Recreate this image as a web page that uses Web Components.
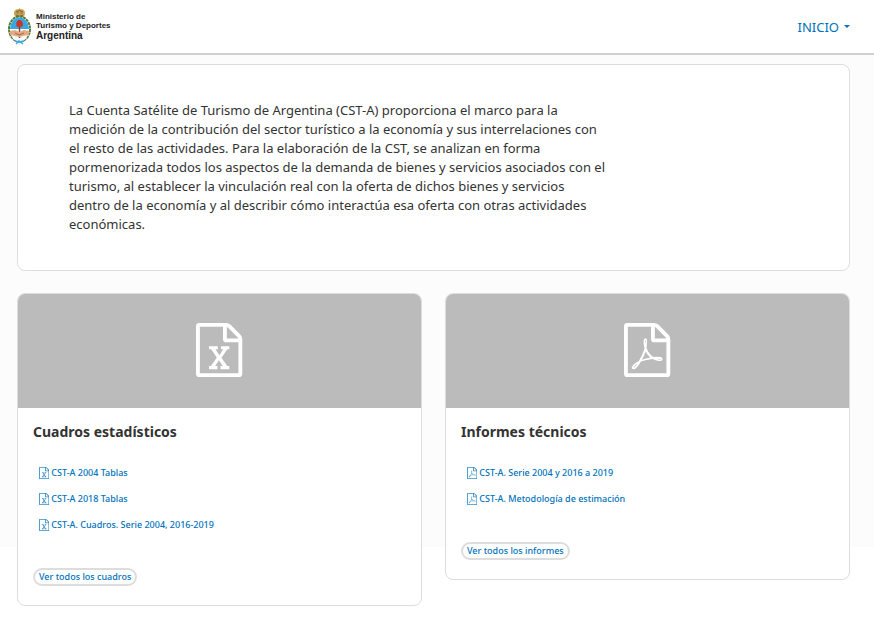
<!DOCTYPE html>
<html lang="es">
<head>
<meta charset="utf-8">
<meta name="viewport" content="width=device-width, initial-scale=1">
<title>Cuenta Satélite de Turismo de Argentina</title>
<style>
body{margin:0;background:#fff linear-gradient(#fcfcfc,#fcfcfc) no-repeat 0 0/100% 547px;color:#333;font-family:"Noto Sans","Open Sans",sans-serif;font-size:13px;line-height:19px}
</style>
</head>
<body>
<cst-page></cst-page>
<script>
const define=(name,html)=>customElements.define(name,class extends HTMLElement{
  constructor(){super();this.attachShadow({mode:'open'}).innerHTML=html;}
});

const PAGE='M1468 380q28 28 48 76t20 88v1152q0 40-28 68t-68 28h-1344q-40 0-68-28t-28-68v-1600q0-40 28-68t68-28h896q40 0 88 20t76 48zm-444-244v376h376q-10-29-22-41l-313-313q-12-12-41-22zm384 1528v-1024h-416q-40 0-68-28t-28-68v-416h-768v1536h1280z';
const GLYPHS={
  excel:'m-979-234v106h281v-106h-75l103-161q5-7 10-16.500t7.500-13.500 3.500-4h2q1 4 5 10 2 4 4.500 7.500t6 8 6.500 8.500l107 161h-76v106h291v-106h-68l-192-273 195-282h67v-107h-279v107h74l-103 159q-4 7-10 16.500t-9 13.500l-2 3h-2q-1-4-5-10-6-11-17-23l-106-159h76v-107h-290v107h68l189 272-194 283h-68z',
  pdf:'m-514-593q33 26 84 56 59-7 117-7 147 0 177 49 16 22 2 52 0 1-1 2l-2 2v1q-6 38-71 38-48 0-115-20t-130-53q-221 24-392 83-153 262-242 262-15 0-28-7l-24-12q-1-1-6-5-10-10-6-36 9-40 56-91.500t132-96.500q14-9 23 6 2 2 2 4 52-85 107-197 68-136 104-262-24-82-30.500-159.500t6.500-127.500q11-40 42-40h22q23 0 35 15 18 21 9 68-2 6-4 8 1 3 1 8v30q-2 123-14 192 55 164 146 238zm-576 411q52-24 137-158-51 40-87.500 84t-49.500 74zm398-920q-15 42-2 132 1-7 7-44 0-3 7-43 1-4 4-8-1-1-1-2-1-2-1-3-1-22-13-36 0 1-1 2v2zm-124 661q135-54 284-81-2-1-13-9.500t-16-13.500q-76-67-127-176-27 86-83 197-30 56-45 83zm646-16q-24-24-140-24 76 28 124 28 14 0 18-1 0-1-2-3z'
};
customElements.define('file-icon',class extends HTMLElement{
  constructor(){super();this.attachShadow({mode:'open'});}
  connectedCallback(){
    this.shadowRoot.innerHTML=`<style>:host{display:block;height:var(--icon-height,12px);flex:none}svg{display:block;height:100%;fill:currentColor}</style>
    <svg viewBox="0 0 1536 1792" aria-hidden="true"><path d="${PAGE}${GLYPHS[this.getAttribute('kind')]}"/></svg>`;
  }
});

define('site-emblem',`<style>:host{display:block;flex:none}svg{display:block}</style>
<svg width="25" height="37" viewBox="0 0 25 37" aria-hidden="true">
<g stroke="#d9b56a" stroke-width="1"><path d="M12.500 0v9M9 1l2 7M16 1l-2 7M7 3l5 6M18 3l-5 6"/></g>
<ellipse cx="12.500" cy="5.500" rx="5.500" ry="4.500" fill="#c9a052"/><path d="M9 4q3.500-3 7 0M9 7q3.500 3 7 0M10 5h1.500M13.500 5h1.500" fill="none" stroke="#7d6238"/>
<ellipse cx="12.500" cy="21" rx="10.500" ry="12.500" fill="#fff" stroke="#54793b" stroke-width="2" stroke-dasharray="3 .6"/>
<path d="M3 21a9.500 11.500 0 0 1 19 0z" fill="#3aa8e0"/><path d="M3 22h19a9.500 11.500 0 0 1-19 0z" fill="#f5fafc"/>
<path d="M12.500 15v15" stroke="#8d4325" stroke-width="1.500"/><path d="M9.500 18q-1-5 2.500-6 4 0 4 5l-1 2q-2-1-5 0z" fill="#c9362a"/>
<path d="M3 23l5-1 4 2 5-2 5 1v4l-6 1-3 1-5-1-5-1z" fill="#e4aa83"/><path d="M8 25l4 2 5-2" fill="none" stroke="#a36443"/>
<path d="M8 33l4 1 5-1M9 36l3-3 4 3" fill="none" stroke="#3aa8e0" stroke-width="1.500"/>
</svg>`);

define('site-header',`<style>
:host{display:block;background:#fff;border-bottom:2px solid #d0d0d0}
header{display:flex;justify-content:space-between;align-items:center;height:53px;padding:0 24px 0 7px}
.brand{display:flex;align-items:center;gap:4px;color:#222;text-decoration:none;font:700 8px/9px "Liberation Sans",Arial,sans-serif}
.brand span span{display:block}.brand .country{font-size:10px;line-height:12px}
button{display:flex;align-items:center;gap:5px;border:0;padding:0;background:none;color:#0072bb;font:13px/20px "Noto Sans",sans-serif}
i{border:3px solid transparent;border-top-color:currentColor;border-bottom:0}
</style>
<header><a class="brand" href="#"><site-emblem></site-emblem><span><span>Ministerio de</span><span>Turismo y Deportes</span><span class="country">Argentina</span></span></a>
<nav><button type="button" aria-haspopup="true">INICIO <i></i></button></nav></header>`);

define('intro-panel',`<style>
:host{display:block;background:#fff;border:1px solid #ddd;border-radius:8px;padding:36px 51px}
p{margin:0;max-width:538px}
</style><p><slot></slot></p>`);

define('file-link',`<style>
:host{display:block}
a{display:flex;align-items:center;gap:2px;color:#0072bb;text-decoration:none;font-size:9px;line-height:12px;font-weight:500}
slot[name=icon]::slotted(*){opacity:.8}
</style><a href="#"><slot name="icon"></slot><slot></slot></a>`);

define('resource-card',`<style>
:host{display:block;background:#fff;border:1px solid #ddd;border-radius:8px;overflow:hidden}
.cover{display:flex;justify-content:center;padding:29px 0 31px;background:#bbb;color:#fff;--icon-height:54px}
.body{padding:14px 15px 19px}
h2{margin:0;font-size:14px;line-height:20px;font-weight:700}
.files{display:grid;gap:14px;padding:25px 6px 37px}
.more{display:inline-block;border:2px solid #ddd;border-radius:10px;padding:0 4px;color:#0072bb;text-decoration:none;font-size:9px;line-height:14px;font-weight:500;background:#fff}
.foot{display:flex}
</style>
<div class="cover"><slot name="cover"></slot></div>
<div class="body"><h2><slot name="title"></slot></h2><div class="files"><slot></slot></div>
<div class="foot"><a class="more" href="#"><slot name="more"></slot></a></div></div>`);

define('cst-page',`<style>
:host{display:block}
main{padding:9px 24px 16px 17px}
.cards{display:grid;grid-template-columns:1fr 1fr;gap:23px;align-items:start;margin-top:22px}
</style>
<site-header></site-header>
<main>
<intro-panel>La Cuenta Satélite de Turismo de Argentina (CST-A) proporciona el marco para la medición de la contribución del sector turístico a la economía y sus interrelaciones con el resto de las actividades. Para la elaboración de la CST, se analizan en forma pormenorizada todos los aspectos de la demanda de bienes y servicios asociados con el turismo, al establecer la vinculación real con la oferta de dichos bienes y servicios dentro de la economía y al describir cómo interactúa esa oferta con otras actividades económicas.</intro-panel>
<div class="cards">
<resource-card><file-icon slot="cover" kind="excel"></file-icon><span slot="title">Cuadros estadísticos</span>
<file-link><file-icon slot="icon" kind="excel"></file-icon>CST-A 2004 Tablas</file-link>
<file-link><file-icon slot="icon" kind="excel"></file-icon>CST-A 2018 Tablas</file-link>
<file-link><file-icon slot="icon" kind="excel"></file-icon>CST-A. Cuadros. Serie 2004, 2016-2019</file-link>
<span slot="more">Ver todos los cuadros</span></resource-card>
<resource-card><file-icon slot="cover" kind="pdf"></file-icon><span slot="title">Informes técnicos</span>
<file-link><file-icon slot="icon" kind="pdf"></file-icon>CST-A. Serie 2004 y 2016 a 2019</file-link>
<file-link><file-icon slot="icon" kind="pdf"></file-icon>CST-A. Metodología de estimación</file-link>
<span slot="more">Ver todos los informes</span></resource-card>
</div>
</main>`);
</script>
</body>
</html>
